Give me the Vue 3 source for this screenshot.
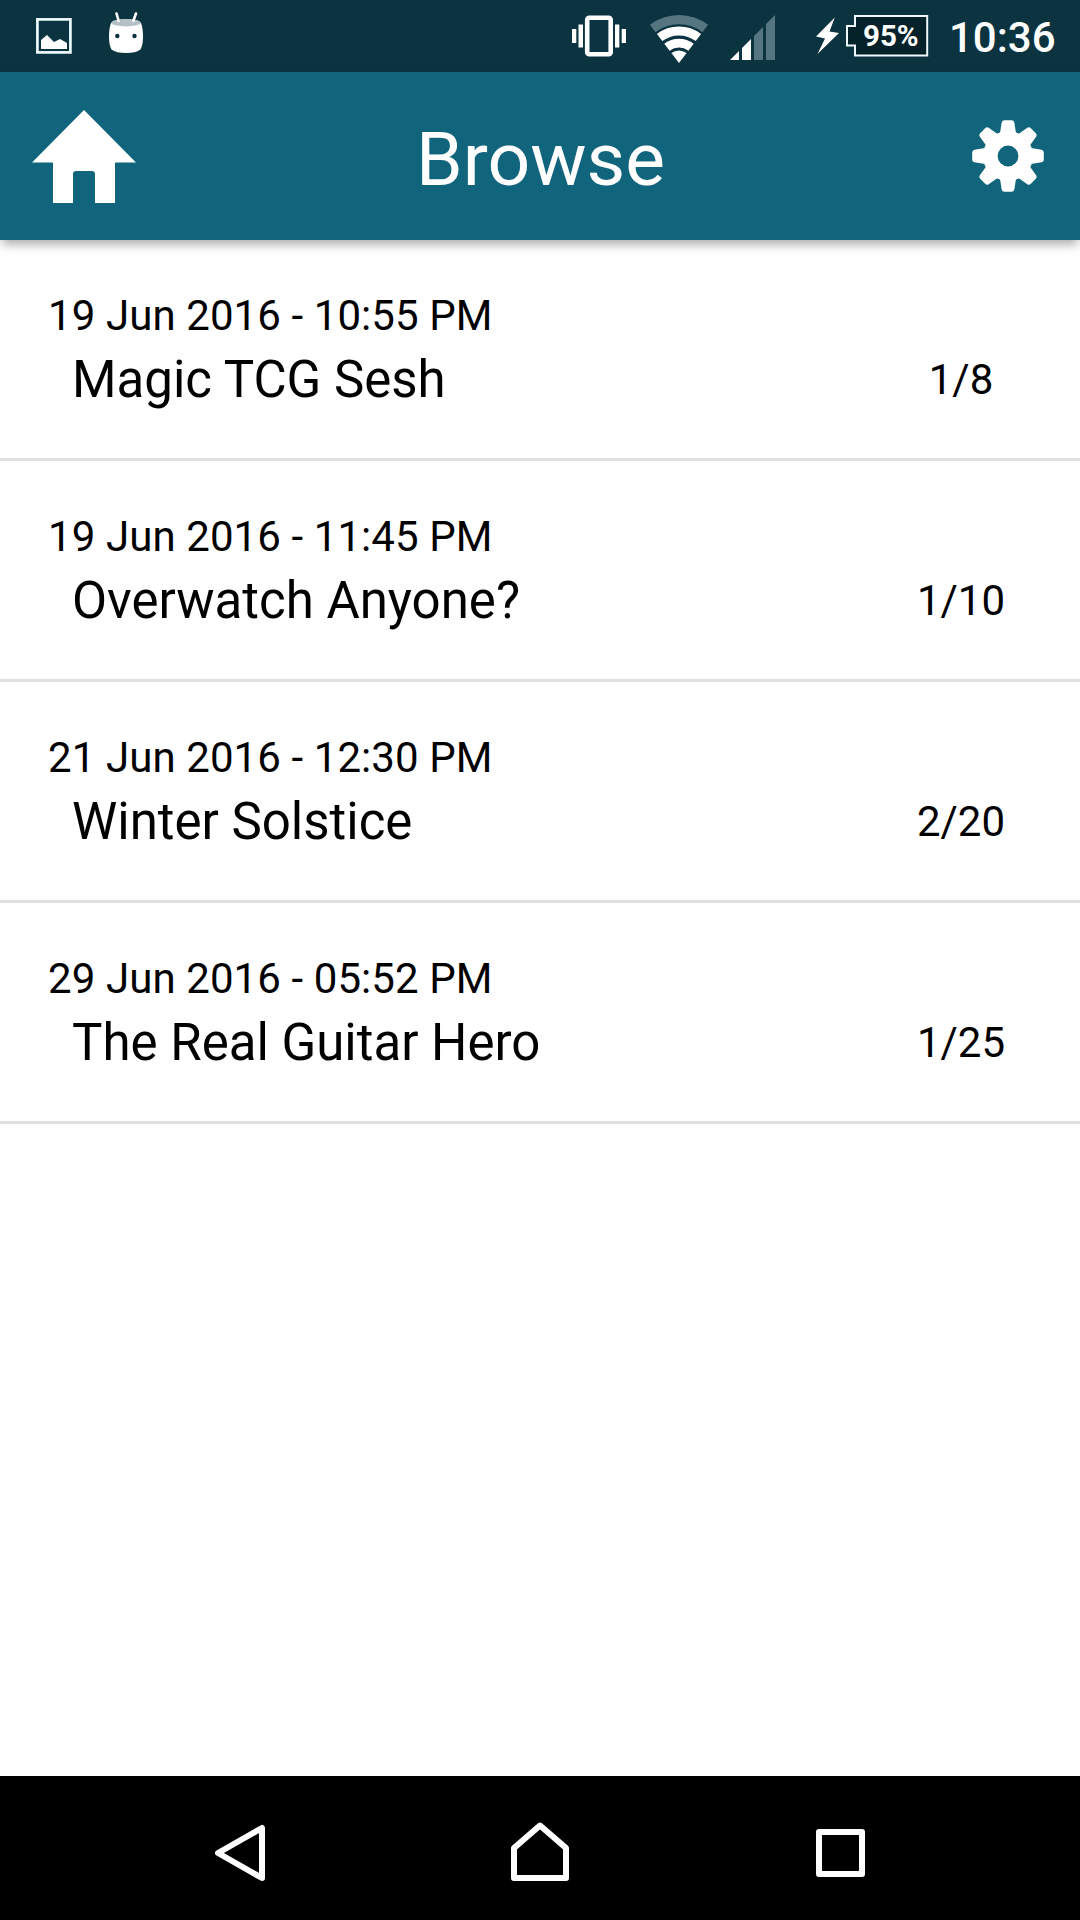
<script setup>
    import { ref } from "vue";

    const events = ref([
        { date: "19 Jun 2016 - 10:55 PM", title: "Magic TCG Sesh", joined: 1, max: 8 },
        { date: "19 Jun 2016 - 11:45 PM", title: "Overwatch Anyone?", joined: 1, max: 10 },
        { date: "21 Jun 2016 - 12:30 PM", title: "Winter Solstice", joined: 2, max: 20 },
        { date: "29 Jun 2016 - 05:52 PM", title: "The Real Guitar Hero", joined: 1, max: 25 },
    ]);

    const teeth = [0, 45, 90, 135, 180, 225, 270, 315];
</script>

<template>
    <div class="screen">
        <div class="status">
            <!-- notifications -->
            <svg class="notifications" width="120" height="72" viewBox="30 0 120 72">
                <rect x="37.4" y="19.4" width="33" height="33" fill="none" stroke="#eefafd" stroke-width="2.7" />
                <path d="M41 40L47 35L54 42L60 39L67 43V49H41Z" fill="#fff" />
                <path d="M111 23Q126 15 141 23Q143 28 143 37Q143 45 140.500 49.500Q136 53 126 53Q116 53 111.500 49.500Q109 45 109 37Q109 28 111 23Z" fill="#fff" />
                <ellipse cx="126" cy="22.700" rx="14.700" ry="3.700" fill="#b5c1c5" />
                <path d="M116.500 13.500L118.700 21M136 13.500L133.300 21" stroke="#fff" stroke-width="2.600" stroke-linecap="round" />
                <circle cx="117.300" cy="36" r="2.200" fill="#0b3340" />
                <circle cx="134.500" cy="36" r="2.200" fill="#0b3340" />
            </svg>

            <!-- vibrate, wifi, signal -->
            <svg class="signals" width="210" height="72" viewBox="570 0 210 72">
                <rect x="587.200" y="17.700" width="23.500" height="36.500" rx="2" fill="none" stroke="#fff" stroke-width="4.600" />
                <path d="M572 29h4.300v14H572zM578.500 24.500h4.500v23h-4.500zM615 24.500h4.300v23H615zM621.700 29h4.300v14h-4.300z" fill="#fff" />
                <path d="M649.900 24.800A48 48 0 0 1 708.100 24.800L702.500 32.200A38.700 38.700 0 0 0 655.500 32.200Z" fill="#557580" />
                <path d="M656.900 34A36.500 36.500 0 0 1 701.100 34L695.700 41.100A27.500 27.500 0 0 0 662.300 41.100Z" fill="#fff" />
                <path d="M664.300 43.700A24.300 24.300 0 0 1 693.700 43.700L688.400 50.700A15.500 15.500 0 0 0 669.600 50.700Z" fill="#fff" />
                <path d="M671.400 53A12.500 12.500 0 0 1 686.600 53L679 63Z" fill="#fff" />
                <path d="M730 60L739 51V60ZM742 48L751 39V60H742Z" fill="#fff" />
                <path d="M754 36L763 27V60H754ZM766 24L775 15V60H766Z" fill="#557580" />
            </svg>

            <svg class="bolt" width="26" height="72" viewBox="814 0 26 72">
                <path d="M834.800 17.500L816 36.500L825 38.500L817.500 54L839 33L829.500 31.500Z" fill="#fff" />
            </svg>
            <div class="battery">
                <svg width="84" height="44" viewBox="845 14 84 44">
                    <path d="M855 16H927.200V55.500H855V45.500H847V26H855Z" fill="#05222b" stroke="#eefafd" stroke-width="2" />
                </svg>
                <span>95%</span>
            </div>
            <span class="clock">10:36</span>
        </div>

        <header>
            <svg width="104" height="168" viewBox="32 72 104 168">
                <path d="M84 110L136 162.500H115V203H95V174Q95 171 92 171H76Q73 171 73 174V203H53V162.500H32Z" fill="#fff" />
            </svg>
            <h1>Browse</h1>
            <svg width="72" height="168" viewBox="-36 -84 72 168">
                <g fill="#fff">
                    <path
                        v-for="deg in teeth"
                        :key="deg"
                        :transform="`rotate(${deg})`"
                        d="M-8.500 -20L-6.300 -33.500Q-5.900 -35.800 -3.500 -35.800H3.500Q5.900 -35.800 6.300 -33.500L8.500 -20Z"
                    />
                    <circle r="25" />
                </g>
                <circle r="10.400" fill="#10657c" />
            </svg>
        </header>

        <main>
            <div v-for="event in events" :key="event.title" class="event">
                <div class="date">{{ event.date }}</div>
                <div class="details">
                    <div class="title">{{ event.title }}</div>
                    <div class="count">{{ event.joined }}/{{ event.max }}</div>
                </div>
            </div>
        </main>

        <nav>
            <svg width="60" height="64" viewBox="210 1821 60 64">
                <path d="M262 1828V1878L218 1853Z" />
            </svg>
            <svg width="60" height="64" viewBox="510 1821 60 64">
                <path d="M540 1825.500L566 1848V1878H514V1848Z" />
            </svg>
            <svg width="60" height="64" viewBox="810 1821 60 64">
                <path d="M819 1832H862V1874H819Z" />
            </svg>
        </nav>
    </div>
</template>

<style>
    body {
        margin: 0;
        background: #fff;
    }
</style>

<style scoped>
    .screen {
        display: flex;
        flex-direction: column;
        width: 1080px;
        height: 1920px;
        overflow: hidden;
        background: #fff;
        color: #000;
        font-family: Roboto, sans-serif;
    }

    svg {
        display: block;
        flex: none;
    }

    .status {
        display: flex;
        align-items: center;
        height: 72px;
        box-sizing: border-box;
        padding: 0 26px 0 30px;
        background: #0b3340;
        color: #fff;
    }

    .signals {
        margin-left: auto;
    }

    .bolt {
        margin-left: 34px;
    }

    .battery {
        position: relative;
        margin-left: 5px;
    }

    .battery span {
        position: absolute;
        left: 18px;
        top: 5px;
        font-size: 29.5px;
        line-height: 34px;
        font-weight: 700;
    }

    .clock {
        width: 105px;
        margin-left: 20px;
        font-size: 42px;
        font-weight: 500;
        line-height: 50px;
        white-space: nowrap;
        padding-top: 4px;
    }

    header {
        display: flex;
        align-items: center;
        justify-content: space-between;
        height: 168px;
        box-sizing: border-box;
        padding: 0 36px 0 32px;
        background: #10657c;
        color: #fff;
        box-shadow: 0 6px 10px -2px rgba(0, 0, 0, 0.35);
    }

    h1 {
        margin: 0 27px 0 0;
        padding-top: 5px;
        font-size: 75px;
        font-weight: 400;
        line-height: 88px;
    }

    main {
        flex: 1;
    }

    .event {
        box-sizing: border-box;
        height: 221px;
        padding: 51px 48px 0;
        border-bottom: 3px solid #e0e0e0;
    }

    .date {
        font-size: 42px;
        line-height: 50px;
        letter-spacing: 0.09px;
    }

    .details {
        display: flex;
        justify-content: space-between;
        align-items: center;
        height: 78px;
        padding-left: 24px;
    }

    .title {
        font-size: 51px;
        line-height: 60px;
    }

    .count {
        width: 140px;
        margin-right: 1px;
        font-size: 42px;
        line-height: 50px;
        text-align: center;
    }

    nav {
        display: flex;
        justify-content: space-between;
        align-items: center;
        height: 144px;
        box-sizing: border-box;
        padding: 10px 210px 0;
        background: #000;
    }

    nav path {
        fill: none;
        stroke: #fff;
        stroke-width: 6;
        stroke-linejoin: round;
    }
</style>
